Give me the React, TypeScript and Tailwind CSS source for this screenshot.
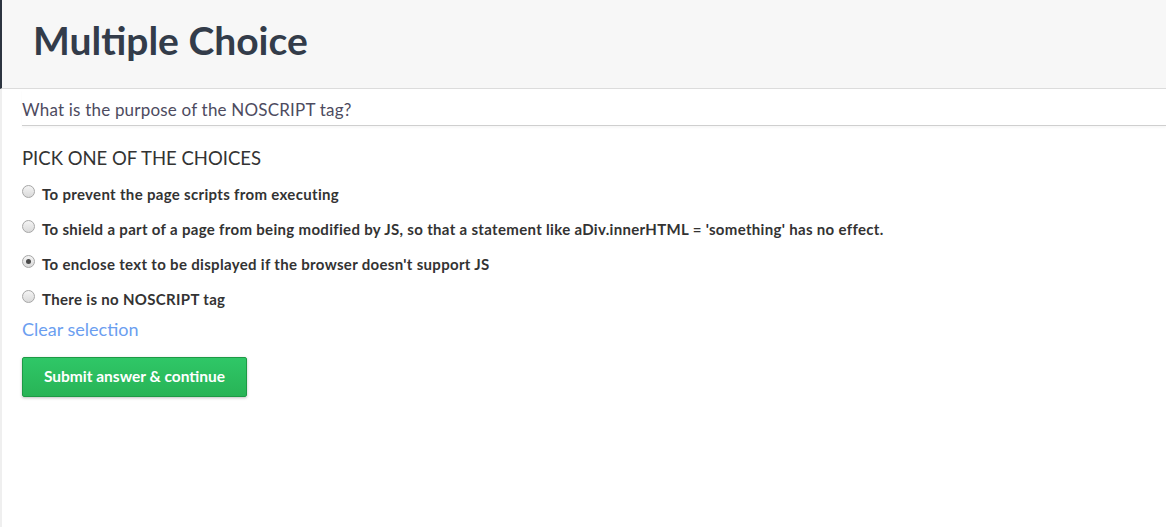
import { useState } from "react";

const choices = [
  "To prevent the page scripts from executing",
  "To shield a part of a page from being modified by JS, so that a statement like aDiv.innerHTML = 'something' has no effect.",
  "To enclose text to be displayed if the browser doesn't support JS",
  "There is no NOSCRIPT tag",
];

export default function App() {
  const [picked, setPicked] = useState<number | null>(2);

  return (
    <div className="min-h-[527px] bg-white font-['Lato',sans-serif] text-[#333]">
      {/* Header */}
      <header className="h-[89px] bg-[#f7f7f7] border-l-2 border-[#2c3440] border-b border-b-[#dcdcdc] pl-[31px] pt-[18px]">
        <h1 className="text-[39px] font-bold text-[#333c4a] leading-[44px]">Multiple Choice</h1>
      </header>

      <main className="border-l-2 border-[#efefef] pl-[20px] min-h-[438px]">
        <div className="border-b border-[#cfcfcf] shadow-[0_2px_2px_rgba(0,0,0,0.03)] pt-[10px] pb-[4px]">
          <p className="text-[17px] tracking-[0.2px] text-[#4d4b60] leading-[22px]">What is the purpose of the NOSCRIPT tag?</p>
        </div>

        <h2 className="mt-[21px] text-[18.5px] text-[#333] leading-[22px]">PICK ONE OF THE CHOICES</h2>

        <ul className="mt-[14px] flex flex-col gap-[13px]">
          {choices.map((c, i) => (
            <li key={i} className="flex items-start h-[22px]">
              <label className="flex items-start cursor-pointer">
                <input
                  type="radio"
                  name="choice"
                  checked={picked === i}
                  onChange={() => setPicked(i)}
                  className="sr-only"
                />
                <span className="mt-[2px] w-[13px] h-[13px] shrink-0 rounded-full border border-[#a6a6a6] bg-gradient-to-b from-[#f4f4f4] to-[#dadada] flex items-center justify-center">
                  {picked === i && <span className="w-[5px] h-[5px] rounded-full bg-[#4a4a4a]" />}
                </span>
                <span className="ml-[7px] text-[15px] font-bold text-[#333] leading-[22px] tracking-[0.32px]">{c}</span>
              </label>
            </li>
          ))}
        </ul>

        <button
          onClick={() => setPicked(null)}
          className="mt-[8px] text-[18px] text-[#6b9ef0] leading-[22px]"
        >
          Clear selection
        </button>

        <div className="mt-[15px]">
          <button className="h-[40px] w-[225px] rounded-[2px] border border-[#1d9a45] bg-gradient-to-b from-[#2fc767] to-[#28b456] text-white text-[15.5px] font-bold shadow-[0_1px_3px_rgba(0,0,0,0.25)]">
            Submit answer &amp; continue
          </button>
        </div>
      </main>
    </div>
  );
}
